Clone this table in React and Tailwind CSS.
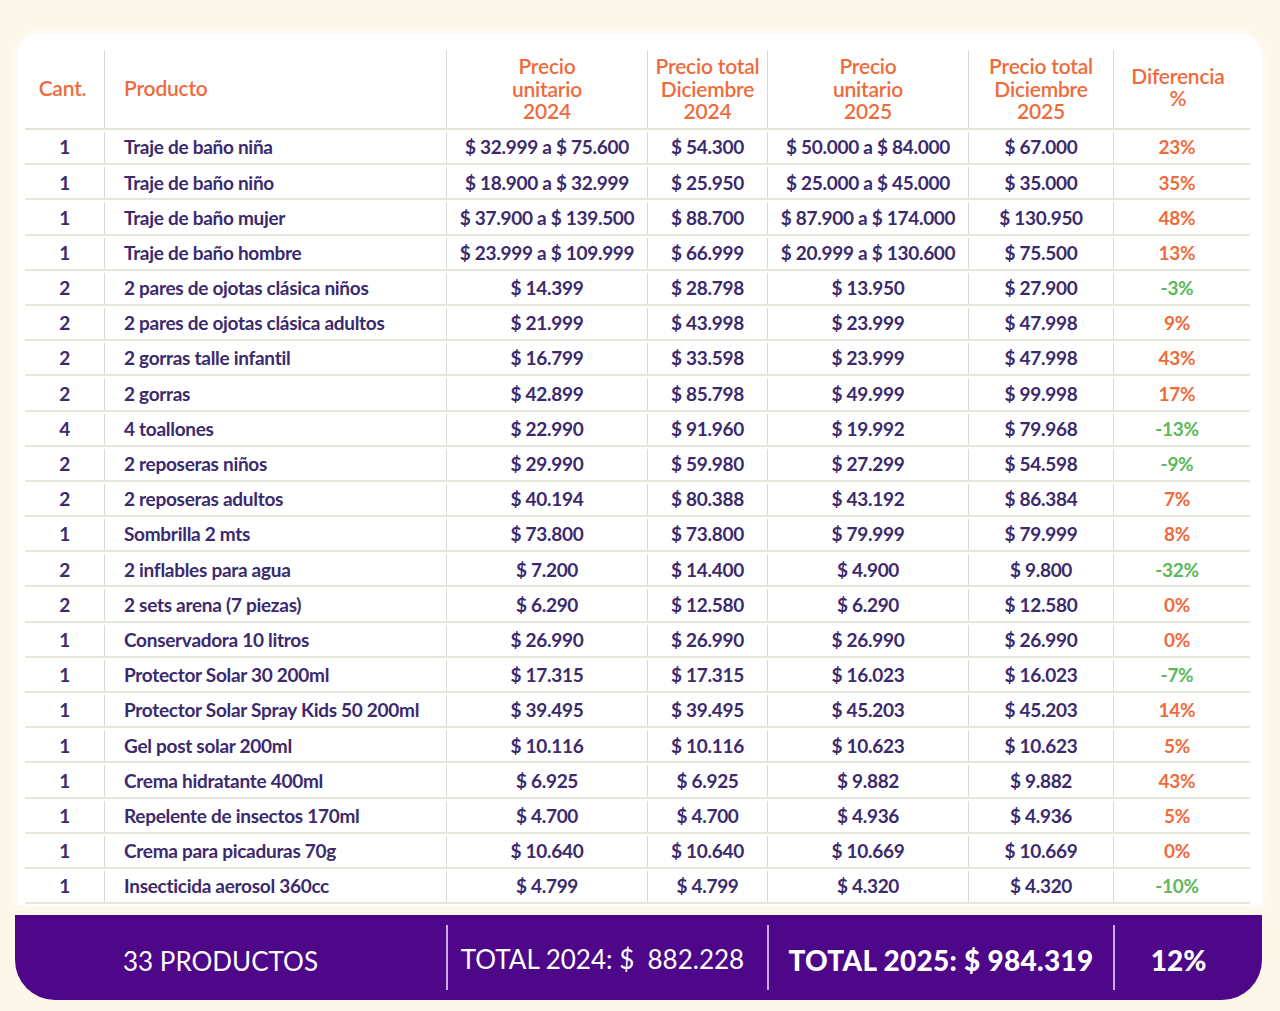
const rows = [
  ['1', 'Traje de baño niña', '$ 32.999 a $ 75.600', '$ 54.300', '$ 50.000 a $ 84.000', '$ 67.000', '23%'],
  ['1', 'Traje de baño niño', '$ 18.900 a $ 32.999', '$ 25.950', '$ 25.000 a $ 45.000', '$ 35.000', '35%'],
  ['1', 'Traje de baño mujer', '$ 37.900 a $ 139.500', '$ 88.700', '$ 87.900 a $ 174.000', '$ 130.950', '48%'],
  ['1', 'Traje de baño hombre', '$ 23.999 a $ 109.999', '$ 66.999', '$ 20.999 a $ 130.600', '$ 75.500', '13%'],
  ['2', '2 pares de ojotas clásica niños', '$ 14.399', '$ 28.798', '$ 13.950', '$ 27.900', '-3%'],
  ['2', '2 pares de ojotas clásica adultos', '$ 21.999', '$ 43.998', '$ 23.999', '$ 47.998', '9%'],
  ['2', '2 gorras talle infantil', '$ 16.799', '$ 33.598', '$ 23.999', '$ 47.998', '43%'],
  ['2', '2 gorras', '$ 42.899', '$ 85.798', '$ 49.999', '$ 99.998', '17%'],
  ['4', '4 toallones', '$ 22.990', '$ 91.960', '$ 19.992', '$ 79.968', '-13%'],
  ['2', '2 reposeras niños', '$ 29.990', '$ 59.980', '$ 27.299', '$ 54.598', '-9%'],
  ['2', '2 reposeras adultos', '$ 40.194', '$ 80.388', '$ 43.192', '$ 86.384', '7%'],
  ['1', 'Sombrilla 2 mts', '$ 73.800', '$ 73.800', '$ 79.999', '$ 79.999', '8%'],
  ['2', '2 inflables para agua', '$ 7.200', '$ 14.400', '$ 4.900', '$ 9.800', '-32%'],
  ['2', '2 sets arena (7 piezas)', '$ 6.290', '$ 12.580', '$ 6.290', '$ 12.580', '0%'],
  ['1', 'Conservadora 10 litros', '$ 26.990', '$ 26.990', '$ 26.990', '$ 26.990', '0%'],
  ['1', 'Protector Solar 30 200ml', '$ 17.315', '$ 17.315', '$ 16.023', '$ 16.023', '-7%'],
  ['1', 'Protector Solar Spray Kids 50 200ml', '$ 39.495', '$ 39.495', '$ 45.203', '$ 45.203', '14%'],
  ['1', 'Gel post solar 200ml', '$ 10.116', '$ 10.116', '$ 10.623', '$ 10.623', '5%'],
  ['1', 'Crema hidratante 400ml', '$ 6.925', '$ 6.925', '$ 9.882', '$ 9.882', '43%'],
  ['1', 'Repelente de insectos 170ml', '$ 4.700', '$ 4.700', '$ 4.936', '$ 4.936', '5%'],
  ['1', 'Crema para picaduras 70g', '$ 10.640', '$ 10.640', '$ 10.669', '$ 10.669', '0%'],
  ['1', 'Insecticida aerosol 360cc', '$ 4.799', '$ 4.799', '$ 4.320', '$ 4.320', '-10%'],
]

const cols = 'grid w-[1225px] grid-cols-[79px_342px_201px_120px_201px_145px_137px]'

export default function App() {
  return (
    <div className="w-[1280px] h-[1011px] bg-[#fdf7e9] overflow-hidden font-['Lato','Open_Sans',sans-serif]">
      <div className="ml-[17px] mr-[18px] mt-[33px] h-[872px] bg-white rounded-t-[24px] pt-[17px] pl-[8px] shadow-[0_0_12px_rgba(255,255,255,0.9)]">
        <div className={`${cols} h-[80px] text-[#ef6b3b] text-[21px] font-semibold leading-[22.5px] tracking-[-0.01em] border-b-2 border-[#e3e3da]`}>
          <div className="flex items-center justify-center pb-[2px] pr-[4px]">Cant.</div>
          <div className="flex items-center pl-[19px] border-l border-[#dadad0] pb-[2px]">Producto</div>
          <div className="flex items-center justify-center text-center border-l border-[#dadad0]">Precio<br />unitario<br />2024</div>
          <div className="flex items-center justify-center text-center border-l border-[#dadad0]">Precio total<br />Diciembre<br />2024</div>
          <div className="flex items-center justify-center text-center border-l border-[#dadad0]">Precio<br />unitario<br />2025</div>
          <div className="flex items-center justify-center text-center border-l border-[#dadad0]">Precio total<br />Diciembre<br />2025</div>
          <div className="flex items-center justify-center text-center border-l border-[#dadad0] pb-[4px] pr-[8px]">Diferencia<br />%</div>
        </div>
        {rows.map((r, i) => {
          const neg = r[6].startsWith('-')
          return (
            <div key={i} className={`${cols} h-[35.2px] pt-[2px] text-[19px] font-bold tracking-[-0.015em] text-[#3b2a6d] border-b-2 border-[#e6e6de]`}>
              <div className="flex items-center justify-center">{r[0]}</div>
              <div className="flex items-center pl-[19px] border-l border-[#dadad0] whitespace-nowrap">{r[1]}</div>
              <div className="flex items-center justify-center border-l border-[#dadad0] whitespace-nowrap">{r[2]}</div>
              <div className="flex items-center justify-center border-l border-[#dadad0] whitespace-nowrap">{r[3]}</div>
              <div className="flex items-center justify-center border-l border-[#dadad0] whitespace-nowrap">{r[4]}</div>
              <div className="flex items-center justify-center border-l border-[#dadad0] whitespace-nowrap">{r[5]}</div>
              <div className={`flex items-center justify-center border-l border-[#dadad0] pr-[10px] ${neg ? 'text-[#5cb85c]' : 'text-[#ef6b3b]'}`}>{r[6]}</div>
            </div>
          )
        })}
      </div>
      <div className="ml-[15px] mr-[18px] mt-[10px] h-[85px] bg-[#4d0788] rounded-b-[40px] grid grid-cols-[431px_321px_346px_149px] text-white text-[26px]">
        <div className="flex items-center justify-center pr-[20px] pt-[8px]">33 PRODUCTOS</div>
        <div className="flex items-center justify-center border-l-2 border-[#c9a8e6] my-[10px] pt-[4px] pr-[10px]">TOTAL 2024: $&nbsp; 882.228</div>
        <div className="flex items-center justify-center border-l-2 border-[#c9a8e6] my-[10px] pt-[4px] text-[28px] tracking-[0.01em] font-black">TOTAL 2025: $ 984.319</div>
        <div className="flex items-center justify-center border-l-2 border-[#c9a8e6] my-[10px] pt-[4px] pr-[20px] text-[28px] font-black">12%</div>
      </div>
    </div>
  )
}
